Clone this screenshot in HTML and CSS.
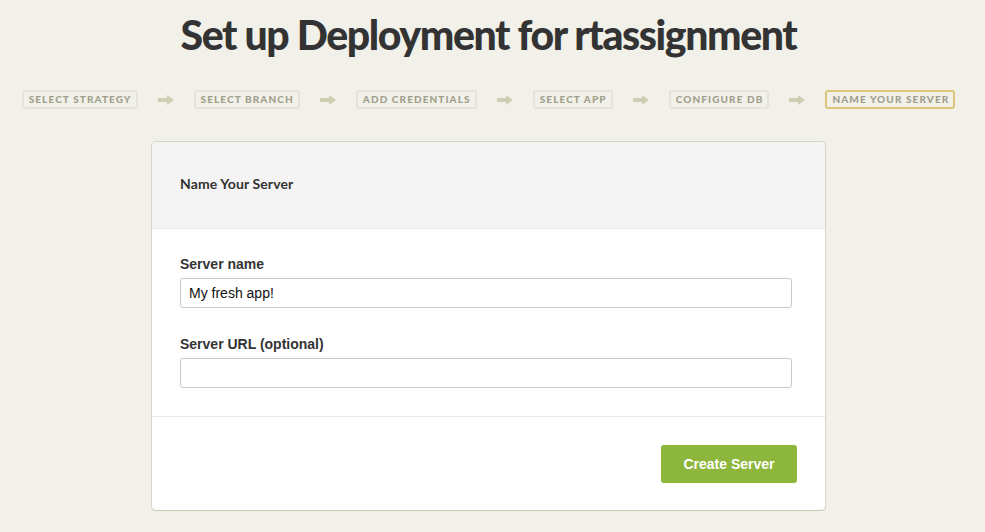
FILE: index.html
```html
<!DOCTYPE html>
<html lang="en">
<head>
<meta charset="utf-8">
<title>Set up Deployment for rtassignment</title>
<link rel="stylesheet" href="styles.css">
</head>
<body>
<div class="page">
  <h1 class="title">Set up Deployment for rtassignment</h1>
  <ol class="steps">
    <li class="step">Select Strategy</li>
    <li class="arrow"><svg width="16" height="10" viewBox="0 0 16 10"><path d="M0 3h9V0l7 5-7 5V7H0z" fill="#cfceb3"/></svg></li>
    <li class="step">Select Branch</li>
    <li class="arrow"><svg width="16" height="10" viewBox="0 0 16 10"><path d="M0 3h9V0l7 5-7 5V7H0z" fill="#cfceb3"/></svg></li>
    <li class="step">Add Credentials</li>
    <li class="arrow"><svg width="16" height="10" viewBox="0 0 16 10"><path d="M0 3h9V0l7 5-7 5V7H0z" fill="#cfceb3"/></svg></li>
    <li class="step">Select App</li>
    <li class="arrow"><svg width="16" height="10" viewBox="0 0 16 10"><path d="M0 3h9V0l7 5-7 5V7H0z" fill="#cfceb3"/></svg></li>
    <li class="step">Configure DB</li>
    <li class="arrow"><svg width="16" height="10" viewBox="0 0 16 10"><path d="M0 3h9V0l7 5-7 5V7H0z" fill="#cfceb3"/></svg></li>
    <li class="step step-active">Name Your Server</li>
  </ol>
  <form class="card">
    <div class="card-header">Name Your Server</div>
    <div class="card-body">
      <label class="field-label" for="name">Server name</label>
      <input class="field-input" id="name" type="text" value="My fresh app!">
      <label class="field-label field-label-second" for="url">Server URL (optional)</label>
      <input class="field-input" id="url" type="text" value="">
    </div>
    <div class="card-footer">
      <button class="btn-create" type="button">Create Server</button>
    </div>
  </form>
</div>
</body>
</html>
```
FILE: styles.css
```css
html, body {
  margin: 0;
  padding: 0;
  background: #f1f0e9;
}
body {
  font-family: "Liberation Sans", Arial, sans-serif;
  color: #333;
}
.page {
  width: 977px;
  display: flex;
  flex-direction: column;
  align-items: center;
}
.title {
  margin: 0;
  padding-top: 10px;
  font-family: "Lato", sans-serif;
  font-weight: 900;
  font-size: 41px;
  line-height: 50px;
  letter-spacing: -1.4px;
  color: #333;
}
.steps {
  list-style: none;
  margin: 30px 0 0;
  padding: 0;
  display: flex;
  align-items: center;
  gap: 20px;
}
.step {
  border: 2px solid #e5e4da;
  border-radius: 3px;
  padding: 0 4px 0 5px;
  height: 15px;
  line-height: 15px;
  font-family: "Lato", sans-serif;
  font-weight: 900;
  font-size: 10px;
  letter-spacing: 1.1px;
  text-transform: uppercase;
  color: #a09f8b;
}
.step-active {
  border-color: #dcc67c;
}
.arrow {
  display: flex;
  align-items: center;
  height: 19px;
}
.card {
  margin: 32px 0 0;
  width: 673px;
  background: #fff;
  border: 1px solid #d7d6c3;
  border-bottom-color: #cbcab5;
  border-radius: 5px;
  box-shadow: 0 1px 1px rgba(0,0,0,0.06);
  overflow: hidden;
}
.card-header {
  background: #f4f4f4;
  border-bottom: 1px solid #ebebeb;
  padding: 0 28px 3px;
  height: 83px;
  display: flex;
  align-items: center;
  font-family: "Lato", sans-serif;
  font-weight: 700;
  font-size: 14px;
  letter-spacing: 0.1px;
  color: #333;
}
.card-body {
  padding: 25px 28px 28px;
  display: flex;
  flex-direction: column;
  align-items: flex-start;
}
.field-label {
  font-weight: 700;
  font-size: 14px;
  line-height: 20px;
  color: #333;
  margin-bottom: 4px;
}
.field-label-second {
  margin-top: 26px;
}
.field-input {
  box-sizing: border-box;
  width: 612px;
  height: 30px;
  border: 1px solid #c9c9c9;
  border-radius: 3px;
  padding: 0 8px;
  font-family: "Liberation Sans", Arial, sans-serif;
  font-size: 14px;
  color: #111;
  background: #fff;
}
.card-footer {
  border-top: 1px solid #e8e8e8;
  padding: 28px 28px 27px;
  display: flex;
  justify-content: flex-end;
}
.btn-create {
  width: 136px;
  height: 38px;
  border: none;
  border-radius: 3px;
  background: #8db63c;
  color: #fff;
  font-family: "Liberation Sans", Arial, sans-serif;
  font-weight: 700;
  font-size: 14px;
}
```
